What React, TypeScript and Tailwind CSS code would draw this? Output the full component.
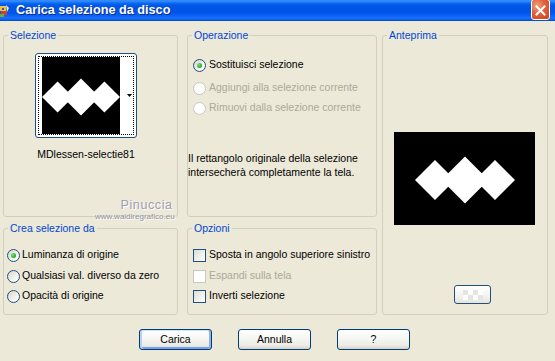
import React from "react";

const FONT = "font-['Liberation_Sans',Arial,sans-serif]";

function Radio({ checked, disabled }: { checked?: boolean; disabled?: boolean }) {
  return (
    <span
      className={
        disabled
          ? "relative inline-block w-[13px] h-[13px] shrink-0 rounded-full border border-[#cac8bb] bg-white"
          : "relative inline-block w-[13px] h-[13px] shrink-0 rounded-full border border-[#1c5180] bg-[linear-gradient(135deg,#d8d5ca_0%,#f4f3ee_60%,#ffffff_100%)]"
      }
    >
      {checked && (
        <span className="absolute left-[3px] top-[3px] w-[5px] h-[5px] rounded-full bg-[radial-gradient(circle_at_35%_35%,#7be279_0%,#31b42f_55%,#1c8e1a_100%)]" />
      )}
    </span>
  );
}

function Check({ disabled }: { disabled?: boolean }) {
  return (
    <span
      className={
        disabled
          ? "inline-block w-[13px] h-[13px] shrink-0 border border-[#cac8bb] bg-white"
          : "inline-block w-[13px] h-[13px] shrink-0 border border-[#1c5180] bg-[linear-gradient(135deg,#dcdcd7_0%,#f2f2ef_60%,#ffffff_100%)]"
      }
    />
  );
}

function Group({
  label,
  className,
  children,
}: {
  label: string;
  className: string;
  children?: React.ReactNode;
}) {
  return (
    <div className={"relative rounded-[3px] border border-[#d0d0bf] " + className}>
      <span className="absolute left-[4px] -top-[8px] bg-[#ece9d8] px-[2px] text-[10.5px] leading-[14px] text-[#0046d5]">
        {label}
      </span>
      {children}
    </div>
  );
}

function Row({ children, className }: { children: React.ReactNode; className: string }) {
  return <div className={"flex items-center h-[14px] gap-[2px] " + className}>{children}</div>;
}

function Diamonds({ w, h, cx, cy, r, rm, blur }: { w: number; h: number; cx: number[]; cy: number; r: number; rm: number; blur?: boolean }) {
  const d = (x: number, rr: number) => `${x - rr},${cy} ${x},${cy - rr} ${x + rr},${cy} ${x},${cy + rr}`;
  return (
    <svg width={w} height={h} viewBox={`0 0 ${w} ${h}`} className="block">
      <defs>
        <filter id="bl" x="-10%" y="-10%" width="120%" height="120%">
          <feGaussianBlur stdDeviation="0.6" />
        </filter>
      </defs>
      <rect width={w} height={h} fill="#000" />
      <g fill="#fff" filter={blur ? "url(#bl)" : undefined}>
        <polygon points={d(cx[0], r)} />
        <polygon points={d(cx[1], rm)} />
        <polygon points={d(cx[2], r)} />
      </g>
    </svg>
  );
}

function Btn({ children, def }: { children: React.ReactNode; def?: boolean }) {
  return (
    <div
      className={
        def
          ? "flex items-center justify-center w-[73px] h-[21px] rounded-[3px] border border-[#003c74] bg-[linear-gradient(180deg,#ffffff_0%,#f6f6f3_45%,#ecebe5_80%,#d8d3c9_100%)] shadow-[inset_2px_0_0_#b9d1f7,inset_-2px_0_0_#8eb2ec,inset_0_1px_0_#cee7ff,inset_0_-2px_0_#7a9ee9] text-[10.5px] text-black"
          : "flex items-center justify-center w-[73px] h-[21px] rounded-[3px] border border-[#003c74] bg-[linear-gradient(180deg,#ffffff_0%,#f6f6f3_45%,#ecebe5_80%,#d8d3c9_100%)] text-[10.5px] text-black"
      }
    >
      {children}
    </div>
  );
}

export default function App() {
  return (
    <div className={"w-[555px] h-[361px] overflow-hidden bg-[#ece9d8] text-black " + FONT}>
      {/* Title bar */}
      <div className="relative flex items-center h-[21px] overflow-hidden bg-[linear-gradient(180deg,#3a8cf5_0%,#2a84ff_8%,#0a6ef8_14%,#0259e8_24%,#0054e3_40%,#0055eb_60%,#0a63f5_75%,#1a6ffd_86%,#0b5ee8_94%,#0048c6_100%)]">
        <svg width="10" height="16" viewBox="0 0 10 16" className="ml-0 shrink-0">
          <rect x="0" y="3" width="6" height="5" fill="#e8c24a" />
          <rect x="1" y="8" width="6" height="4" fill="#d04030" />
          <rect x="0" y="11" width="4" height="3" fill="#6cae3a" />
          <path d="M6 2 L9 5 L7 9 Z" fill="#f4e7c0" />
          <rect x="2" y="5" width="2" height="2" fill="#3a5a9a" />
        </svg>
        <span className="ml-[6px] text-[12.7px] font-bold leading-none text-white [text-shadow:1px_1px_0_#0a2a8a]">
          Carica selezione da disco
        </span>
        <div className="ml-auto mr-[5px] -mt-[3px] flex items-center justify-center w-[19px] h-[21px] rounded-[3px] border border-white bg-[radial-gradient(circle_at_30%_30%,#f0a080_0%,#e2603a_45%,#cf4116_100%)]">
          <svg width="11" height="11" viewBox="0 0 11 11" className="mt-[3px]">
            <path d="M1.5 1.5 L9.5 9.5 M9.5 1.5 L1.5 9.5" stroke="#fff" strokeWidth="2" strokeLinecap="square" />
          </svg>
        </div>
      </div>

      {/* Content */}
      <div className="flex pl-[3px] pt-[14px]">
        <div className="flex flex-col w-[175px]">
          <Group label="Selezione" className="h-[182px]">
            <div className="pl-[31px] pt-[17px]">
              <div className="w-[102px] h-[85px] rounded-[3px] border border-[#1f4f7f] bg-white p-[2px]">
                <div className="flex h-full border border-dotted border-black">
                  <div className="ml-[3px] w-[78px] h-full overflow-hidden">
                    <Diamonds w={78} h={77} cx={[15.6, 39, 62.4]} cy={40} r={15.6} rm={18.5} blur />
                  </div>
                  <div className="flex flex-1 items-center justify-end pr-[1px]">
                    <svg width="5" height="3" viewBox="0 0 5 3">
                      <polygon points="0,0 5,0 2.5,3" fill="#000" />
                    </svg>
                  </div>
                </div>
              </div>
              <div className="mt-[10px] w-[102px] text-center text-[10.5px] leading-[13px] whitespace-nowrap">
                MDlessen-selectie81
              </div>
            </div>
            <div className="absolute left-[91px] top-[162px] flex flex-col items-end select-none">
              <span className="text-[12.5px] leading-[14px] tracking-[0.6px] text-[#a09cb2] [text-shadow:1px_1px_0_#ffffff]">
                Pinuccia
              </span>
              <span className="text-[8px] leading-[9px] text-[#918fa2] [text-shadow:1px_1px_0_#ffffff] -mr-[2px]">
                www.waidiregrafico.eu
              </span>
            </div>
          </Group>
          <Group label="Crea selezione da" className="h-[87px] mt-[11px]">
            <div className="pl-[3px] pt-[19px] text-[10.5px]">
              <Row className="">
                <Radio checked />
                <span>Luminanza di origine</span>
              </Row>
              <Row className="mt-[7px]">
                <Radio />
                <span>Qualsiasi val. diverso da zero</span>
              </Row>
              <Row className="mt-[6px]">
                <Radio />
                <span>Opacità di origine</span>
              </Row>
            </div>
          </Group>
        </div>

        <div className="flex flex-col w-[190px] ml-[9px]">
          <Group label="Operazione" className="h-[182px]">
            <div className="pt-[22px] text-[10.5px]">
              <Row className="pl-[5px]">
                <Radio checked />
                <span className="ml-[1px]">Sostituisci selezione</span>
              </Row>
              <Row className="pl-[5px] mt-[9px]">
                <Radio disabled />
                <span className="ml-[1px] text-[#aca899]">Aggiungi alla selezione corrente</span>
              </Row>
              <Row className="pl-[5px] mt-[6px]">
                <Radio disabled />
                <span className="ml-[1px] text-[#aca899]">Rimuovi dalla selezione corrente</span>
              </Row>
              <p className="mt-[36px] leading-[14px]">
                Il rettangolo originale della selezione
                <br />
                intersecherà completamente la tela.
              </p>
            </div>
          </Group>
          <Group label="Opzioni" className="h-[87px] mt-[11px]">
            <div className="pl-[5px] pt-[19px] text-[10.5px]">
              <Row className="">
                <Check />
                <span className="ml-[1px]">Sposta in angolo superiore sinistro</span>
              </Row>
              <Row className="mt-[7px]">
                <Check disabled />
                <span className="ml-[1px] text-[#aca899]">Espandi sulla tela</span>
              </Row>
              <Row className="mt-[6px]">
                <Check />
                <span className="ml-[1px]">Inverti selezione</span>
              </Row>
            </div>
          </Group>
        </div>

        <Group label="Anteprima" className="w-[166px] h-[280px] ml-[5px]">
          <div className="pl-[11px] pt-[96px]">
            <Diamonds w={141} h={93} cx={[41, 71, 101]} cy={48} r={20} rm={23.5} />
            <div className="ml-[60px] mt-[60px] flex items-center justify-center w-[37px] h-[19px] rounded-[3px] border border-[#1f4f7f] bg-[linear-gradient(180deg,#ffffff_0%,#f3f2ee_60%,#e6e3da_100%)]">
              <div className="grid grid-cols-[repeat(4,5px)] grid-rows-[repeat(2,5px)]">
                <span className="bg-[#e4e4e4]" />
                <span className="bg-white" />
                <span className="bg-[#e4e4e4]" />
                <span className="bg-white" />
                <span className="bg-white" />
                <span className="bg-[#e4e4e4]" />
                <span className="bg-white" />
                <span className="bg-[#e4e4e4]" />
              </div>
            </div>
          </div>
        </Group>
      </div>

      {/* Buttons */}
      <div className="flex mt-[14px] pl-[139px] gap-[26px]">
        <Btn def>Carica</Btn>
        <Btn>Annulla</Btn>
        <Btn>?</Btn>
      </div>
    </div>
  );
}
